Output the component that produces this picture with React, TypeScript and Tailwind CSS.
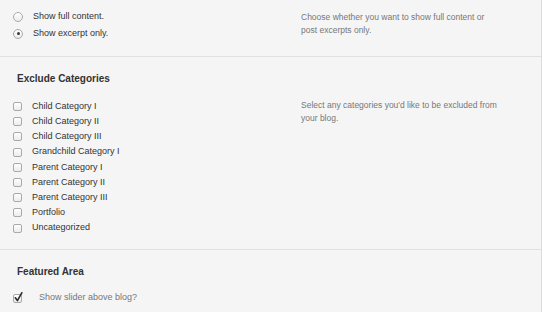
const categories = [
  'Child Category I',
  'Child Category II',
  'Child Category III',
  'Grandchild Category I',
  'Parent Category I',
  'Parent Category II',
  'Parent Category III',
  'Portfolio',
  'Uncategorized',
]

function Radio({ checked }: { checked?: boolean }) {
  return (
    <span className="w-[10px] h-[10px] rounded-full border border-[#a9a9a9] bg-gradient-to-b from-white to-[#ececec] flex items-center justify-center shrink-0">
      {checked && <span className="w-[3px] h-[3px] rounded-full bg-[#3a3a3a]" />}
    </span>
  )
}

function Checkbox({ checked }: { checked?: boolean }) {
  return (
    <span className="relative w-[9px] h-[9px] rounded-[2px] border border-[#a9a9a9] bg-gradient-to-b from-white to-[#ececec] shrink-0">
      {checked && (
        <svg className="absolute left-[0px] top-[-3px]" width="9" height="10" viewBox="0 0 9 10">
          <path d="M1.3 5.8 L3.4 8.6 L7.8 0.8" fill="none" stroke="#2b2b2b" strokeWidth="1.6" strokeLinecap="round" strokeLinejoin="round" />
        </svg>
      )}
    </span>
  )
}

export default function App() {
  return (
    <div className="w-[542px] h-[312px] overflow-hidden bg-[#f5f5f5] border-r border-[#dcdcdc] font-['Liberation_Sans',Arial,sans-serif]">
      {/* excerpt / full content */}
      <div className="h-[57px] border-b border-[#e0e0e0] flex pt-[8px]">
        <div className="w-[301px] pl-[13px]">
          {['Show full content.', 'Show excerpt only.'].map((label, i) => (
            <label key={label} className="h-[17px] flex items-center gap-[10px] text-[9px] text-[#333]">
              <Radio checked={i === 1} />
              {label}
            </label>
          ))}
        </div>
        <p className="w-[192px] pt-[3px] text-[8.5px] leading-[13px] text-[#777]">
          Choose whether you want to show full content or post excerpts only.
        </p>
      </div>

      {/* exclude categories */}
      <div className="border-b border-[#e0e0e0] pt-[16px] pb-[13px]">
        <h3 className="pl-[17px] text-[10px] leading-[12px] font-bold text-[#333]">Exclude Categories</h3>
        <div className="flex mt-[14px]">
          <div className="w-[301px] pl-[13px]">
            {categories.map((c) => (
              <label key={c} className="h-[15.2px] flex items-center gap-[10px] text-[9px] text-[#333]">
                <Checkbox />
                {c}
              </label>
            ))}
          </div>
          <p className="w-[205px] text-[8.5px] leading-[13px] text-[#777]">
            Select any categories you'd like to be excluded from your blog.
          </p>
        </div>
      </div>

      {/* featured area */}
      <div className="pt-[16px]">
        <h3 className="pl-[17px] text-[10px] leading-[12px] font-bold text-[#333]">Featured Area</h3>
        <label className="mt-[13px] pl-[13px] h-[15px] flex items-center gap-[17px] text-[9px] text-[#777]">
          <Checkbox checked />
          Show slider above blog?
        </label>
      </div>
    </div>
  )
}
